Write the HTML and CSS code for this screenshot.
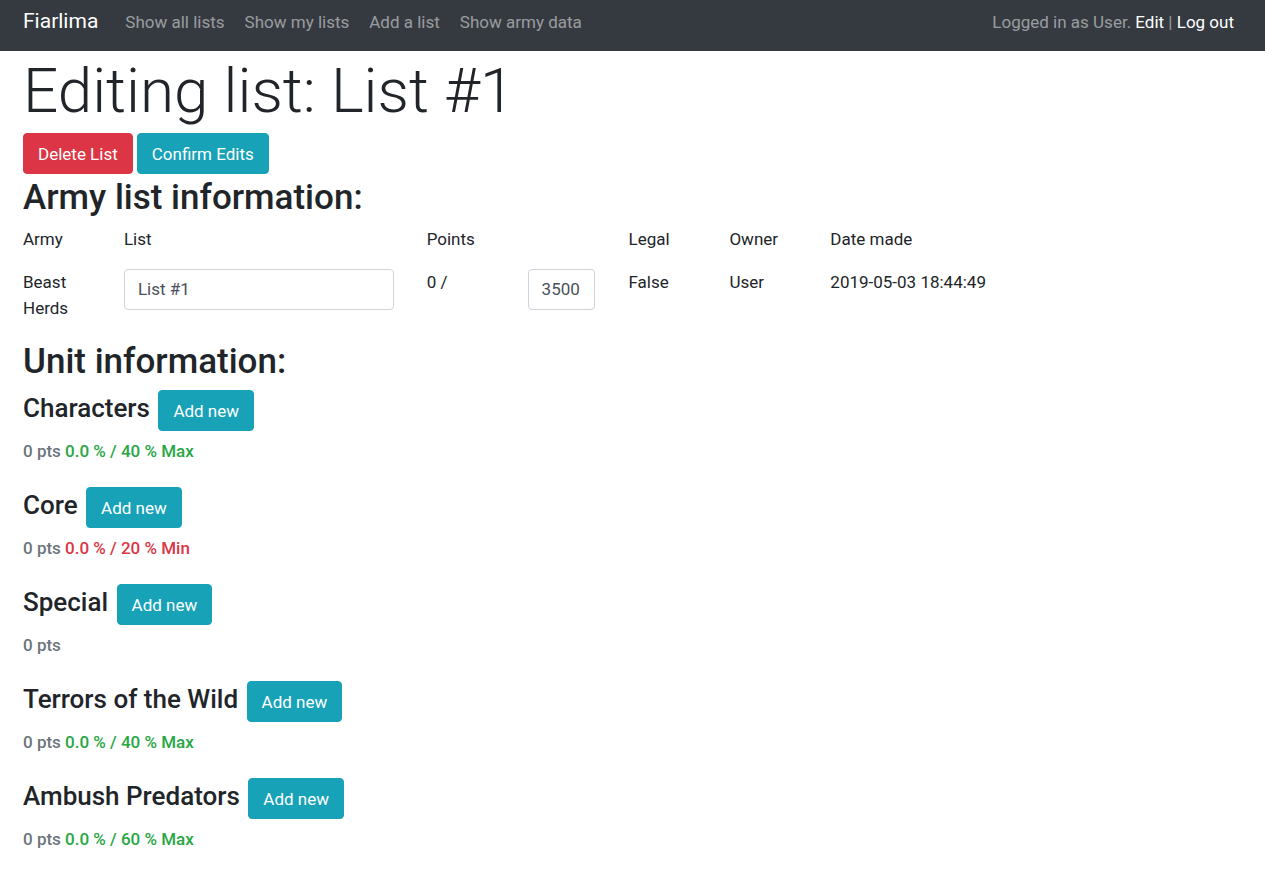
FILE: index.html
```html
<!DOCTYPE html>
<html lang="en">
<head>
<meta charset="utf-8">
<title>Fiarlima</title>
<link rel="stylesheet" href="styles.css">
</head>
<body>
<nav class="navbar">
  <a class="brand" href="#">Fiarlima</a>
  <ul class="nav">
    <li><a href="#">Show all lists</a></li>
    <li><a href="#">Show my lists</a></li>
    <li><a href="#">Add a list</a></li>
    <li><a href="#">Show army data</a></li>
  </ul>
  <p class="account">Logged in as User. <a href="#">Edit</a> | <a href="#">Log out</a></p>
</nav>
<main class="container">
  <h1>Editing list: List #1</h1>
  <div class="actions">
    <button class="btn danger" type="button">Delete List</button>
    <button class="btn info" type="button">Confirm Edits</button>
  </div>
  <h2>Army list information:</h2>
  <div class="row labels">
    <div>Army</div>
    <label class="wide" for="name">List</label>
    <label class="points" for="points">Points</label>
    <div>Legal</div>
    <div>Owner</div>
    <div class="date">Date made</div>
  </div>
  <div class="row values">
    <div>Beast Herds</div>
    <div class="wide"><input id="name" type="text" value="List #1"></div>
    <div>0 /</div>
    <div><input id="points" type="text" value="3500"></div>
    <div>False</div>
    <div>User</div>
    <div class="date">2019-05-03 18:44:49</div>
  </div>
  <h2>Unit information:</h2>
  <section class="unit">
    <h3>Characters <button class="btn info" type="button">Add new</button></h3>
    <p>0 pts <span class="ok">0.0 % / 40 % Max</span></p>
  </section>
  <section class="unit">
    <h3>Core <button class="btn info" type="button">Add new</button></h3>
    <p>0 pts <span class="bad">0.0 % / 20 % Min</span></p>
  </section>
  <section class="unit">
    <h3>Special <button class="btn info" type="button">Add new</button></h3>
    <p>0 pts</p>
  </section>
  <section class="unit">
    <h3>Terrors of the Wild <button class="btn info" type="button">Add new</button></h3>
    <p>0 pts <span class="ok">0.0 % / 40 % Max</span></p>
  </section>
  <section class="unit">
    <h3>Ambush Predators <button class="btn info" type="button">Add new</button></h3>
    <p>0 pts <span class="ok">0.0 % / 60 % Max</span></p>
  </section>
</main>
</body>
</html>
```
FILE: styles.css
```css
* { box-sizing: border-box; }
body {
  margin: 0;
  background: #fff;
  color: #212529;
  font: 400 17px/26px Roboto, sans-serif;
}
a { text-decoration: none; }
h1, h2, h3, p, ul { margin: 0; }
.navbar {
  display: flex;
  align-items: center;
  padding: 0 31px 8px 23px;
  background: #343a40;
}
.brand {
  margin-right: 18px;
  color: #fff;
  font-size: 21px;
  line-height: 43px;
}
.nav {
  display: flex;
  flex: 1;
  gap: 2px;
  padding: 0;
  list-style: none;
}
.nav a {
  padding: 0 9px;
  color: rgba(255, 255, 255, .5);
}
.account { color: rgba(255, 255, 255, .5); }
.account a { color: #fff; }
.container { padding: 2px 31px 32px 23px; }
h1 {
  margin-bottom: 4px;
  font-size: 62px;
  font-weight: 300;
  line-height: 76px;
}
h2 {
  margin-bottom: 6px;
  padding-top: 2px;
  font-size: 35px;
  font-weight: 500;
  line-height: 44px;
}
h3 {
  margin-bottom: 7px;
  font-size: 26px;
  font-weight: 500;
  line-height: 32px;
}
.btn {
  padding: 8px 14px 6px;
  border: 1px solid;
  border-radius: 4px;
  color: #fff;
  font: 400 17px/25px Roboto, sans-serif;
  vertical-align: middle;
}
h3 .btn { margin-left: 2px; }
.actions { display: flex; gap: 4px; }
.danger { background: #dc3545; border-color: #dc3545; }
.info { background: #17a2b8; border-color: #17a2b8; }
.row {
  display: grid;
  grid-template-columns: repeat(12, 1fr);
}
.row > * { padding-right: 33px; }
.wide { grid-column: span 3; }
.points { grid-column: span 2; }
.date { grid-column: span 4; }
.labels { margin-bottom: 17px; }
.values { margin-bottom: 17px; }
input {
  display: block;
  width: 100%;
  padding: 7px 13px;
  border: 1px solid #ced4da;
  border-radius: 4px;
  background: #fff;
  color: #495057;
  font: 400 17px/25px Roboto, sans-serif;
}
.unit { margin-bottom: 23px; }
.unit p {
  color: #6c757d;
  font-weight: 500;
}
.unit .ok { color: #28a745; }
.unit .bad { color: #dc3545; }
```
